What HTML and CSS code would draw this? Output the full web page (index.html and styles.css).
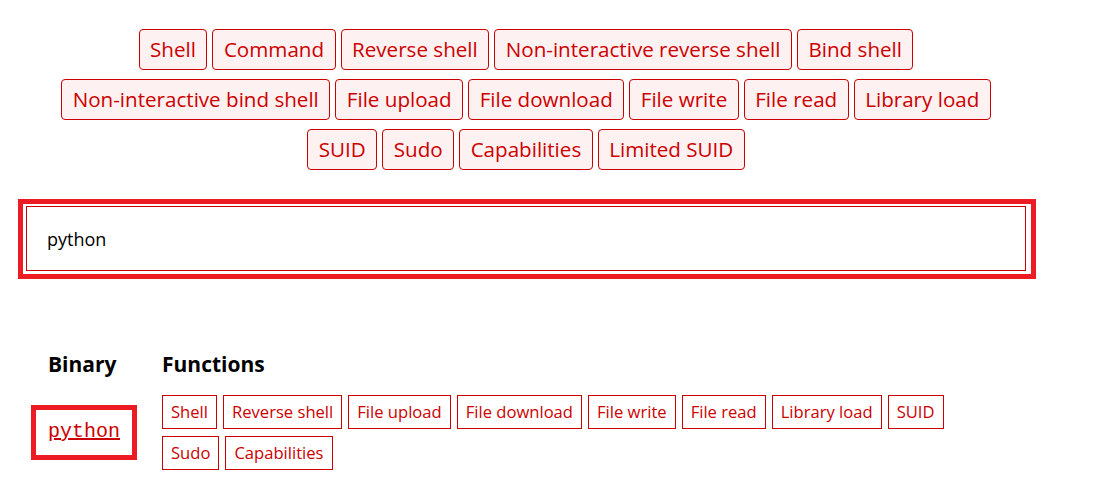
FILE: index.html
```html
<!DOCTYPE html>
<html lang="en">

<head>
  <meta charset="UTF-8" />
  <meta name="viewport" content="width=device-width, initial-scale=1.0" />
  <title>GTFOBins</title>
  <link rel="stylesheet" href="styles.css">
</head>

<body>
  <div class="page">

    <nav class="filters">
      <a class="filter" href="#shell">Shell</a>
      <a class="filter" href="#command">Command</a>
      <a class="filter" href="#reverse-shell">Reverse shell</a>
      <a class="filter" href="#non-interactive-reverse-shell">Non-interactive reverse shell</a>
      <a class="filter" href="#bind-shell">Bind shell</a>
      <a class="filter" href="#non-interactive-bind-shell">Non-interactive bind shell</a>
      <a class="filter" href="#file-upload">File upload</a>
      <a class="filter" href="#file-download">File download</a>
      <a class="filter" href="#file-write">File write</a>
      <a class="filter" href="#file-read">File read</a>
      <a class="filter" href="#library-load">Library load</a>
      <a class="filter" href="#suid">SUID</a>
      <a class="filter" href="#sudo">Sudo</a>
      <a class="filter" href="#capabilities">Capabilities</a>
      <a class="filter" href="#limited-suid">Limited SUID</a>
    </nav>

    <div class="mark mark-search">
      <input class="search" type="text" value="python" />
    </div>

    <table class="bin-table">
      <thead>
        <tr>
          <th class="col-bin">Binary</th>
          <th class="col-fn">Functions</th>
        </tr>
      </thead>
      <tbody>
        <tr>
          <td class="col-bin">
            <span class="mark mark-link"><a class="bin-name" href="#python">python</a></span>
          </td>
          <td class="col-fn">
            <ul class="tags">
              <li><a class="tag" href="#shell">Shell</a></li>
              <li><a class="tag" href="#reverse-shell">Reverse shell</a></li>
              <li><a class="tag" href="#file-upload">File upload</a></li>
              <li><a class="tag" href="#file-download">File download</a></li>
              <li><a class="tag" href="#file-write">File write</a></li>
              <li><a class="tag" href="#file-read">File read</a></li>
              <li><a class="tag" href="#library-load">Library load</a></li>
              <li><a class="tag" href="#suid">SUID</a></li>
              <li><a class="tag" href="#sudo">Sudo</a></li>
              <li><a class="tag" href="#capabilities">Capabilities</a></li>
            </ul>
          </td>
        </tr>
      </tbody>
    </table>

  </div>
</body>

</html>
```

FILE: styles.css
```css
body,
div,
ul,
li,
table,
th,
td {
  margin: 0;
  padding: 0;
}

body {
  margin: 8px;
  font-family: "Open Sans", "Noto Sans CJK JP", sans-serif;
  color: #000;
  background: #fff;
}

.page {
  margin-left: 8px;
  width: 1020px;
}

/* filter buttons */
.filters {
  display: flex;
  flex-wrap: wrap;
  justify-content: center;
  gap: 9px 5px;
  padding: 21px 30px 0;
}

.filter {
  display: block;
  padding: 5px 10.5px;
  font-size: 20.6px;
  line-height: 29px;
  color: #c00;
  text-decoration: none;
  background: #fdf1f1;
  border: 1px solid #c00;
  border-radius: 4px;
}

/* red highlight frames */
.mark {
  border: 5px solid #ed1c24;
  box-sizing: border-box;
}

.mark-search {
  margin: 29px 0 0 2px;
  width: 1018px;
  padding: 2px 5px 3px 3px;
}

.search {
  display: block;
  box-sizing: border-box;
  width: 1000px;
  height: 65px;
  margin: 0;
  padding: 0 20px;
  font-family: "Open Sans", "Noto Sans CJK JP", sans-serif;
  font-size: 18px;
  color: #000;
  border: 1px solid #c00;
  outline: none;
}

/* results table */
.bin-table {
  margin: 71px 0 0 15px;
  border-collapse: collapse;
  border-spacing: 0;
}

.bin-table th {
  padding: 0 0 17px;
  font-size: 21px;
  line-height: 28px;
  font-weight: bold;
  text-align: left;
}

.bin-table th.col-bin {
  width: 114px;
  padding-left: 17px;
}

.bin-table td {
  vertical-align: middle;
}

td.col-bin {
  width: 131px;
}

.mark-link {
  display: inline-block;
  padding: 6px 12px 7px;
}

.bin-name {
  font-family: "Liberation Mono", "DejaVu Sans Mono", monospace;
  font-size: 20px;
  line-height: 32px;
  color: #c00;
  text-decoration: underline;
}

.tags {
  display: flex;
  flex-wrap: wrap;
  gap: 7px 6px;
  width: 800px;
  list-style: none;
}

.tag {
  display: block;
  padding: 4px 8px;
  font-size: 16.6px;
  line-height: 24px;
  color: #c00;
  text-decoration: none;
  border: 1px solid #c00;
}
```
